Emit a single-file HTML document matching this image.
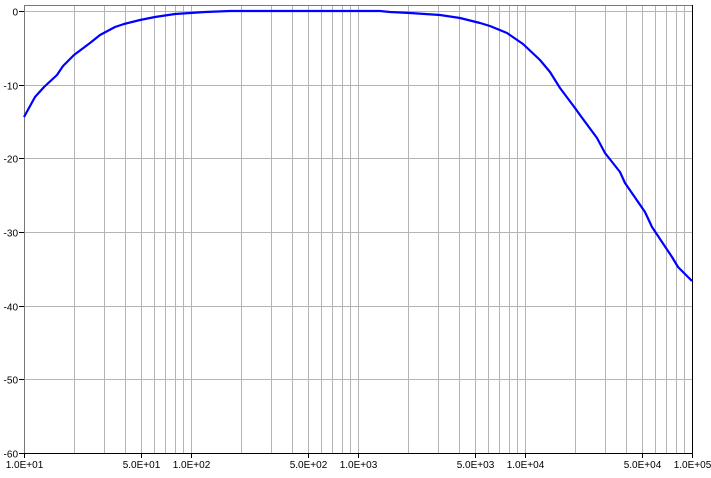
<!DOCTYPE html>
<html><head><style>
html,body{margin:0;padding:0;background:#fff;width:711px;height:478px;overflow:hidden}
text{font-family:"Liberation Sans",sans-serif;font-size:10px;fill:#000}
</style></head><body>
<svg width="711" height="478" xmlns="http://www.w3.org/2000/svg">
<g stroke="#b4b4b4" stroke-width="1" id="g"></g>
<line x1="24" y1="5.5" x2="692" y2="5.5" stroke="#777" />
<g id="yl"></g>
<line x1="24.5" y1="5" x2="24.5" y2="454" stroke="#777"/>
<line x1="24" y1="453.5" x2="692" y2="453.5" stroke="#000"/>
<line x1="692.5" y1="5" x2="692.5" y2="454" stroke="#000"/>
<polyline fill="none" stroke="#0000ff" stroke-width="2.2" stroke-linejoin="round" points="24,117 35,97 44,87 57,75 63,66 74,55 90,43 100,35 115,27 124,24 140,20 155,17 175,14 190,13 205,12 230,11 380,11 390,12 410,13 440,15 460,18 480,23 490,26 507,33 523,44 540,60 550,72 560,88 575,108 580,115 597,138 605,153 620,172 625,183 645,212 652,227 672,257 678,267 692,281"/>
<g id="l"></g>
</svg>
<script>
var ns="http://www.w3.org/2000/svg",g=document.getElementById('g'),l=document.getElementById('l');
function ln(p,a){var e=document.createElementNS(ns,'line');for(var k in a)e.setAttribute(k,a[k]);p.appendChild(e);}
function tx(x,y,s,anc){var e=document.createElementNS(ns,'text');e.setAttribute('x',x);e.setAttribute('y',y);e.setAttribute('text-anchor',anc);e.textContent=s;l.appendChild(e);}
for(var d=0;d<4;d++)for(var m=2;m<=10;m++){var x=Math.round(24+167*(d+Math.log10(m)))+.5;ln(g,{x1:x,y1:6,x2:x,y2:453});}
for(var i=0;i<=6;i++){var y=Math.round(11+i*73.67)+.5;if(i<6)ln(g,{x1:24,y1:y,x2:692,y2:y});ln(l,{x1:19,y1:y,x2:24,y2:y,stroke:'#000'});tx(18,y+4,i==0?'0':'-'+i*10,'end');}
var labs=[[0,'1.0E+01'],[Math.log10(5),'5.0E+01'],[1,'1.0E+02'],[1+Math.log10(5),'5.0E+02'],[2,'1.0E+03'],[2+Math.log10(5),'5.0E+03'],[3,'1.0E+04'],[3+Math.log10(5),'5.0E+04'],[4,'1.0E+05']];
labs.forEach(function(a){var x=Math.round(24+167*a[0])+.5;ln(l,{x1:x,y1:453,x2:x,y2:458,stroke:'#000'});tx(x,468,a[1],'middle');});
</script>
</body></html>
